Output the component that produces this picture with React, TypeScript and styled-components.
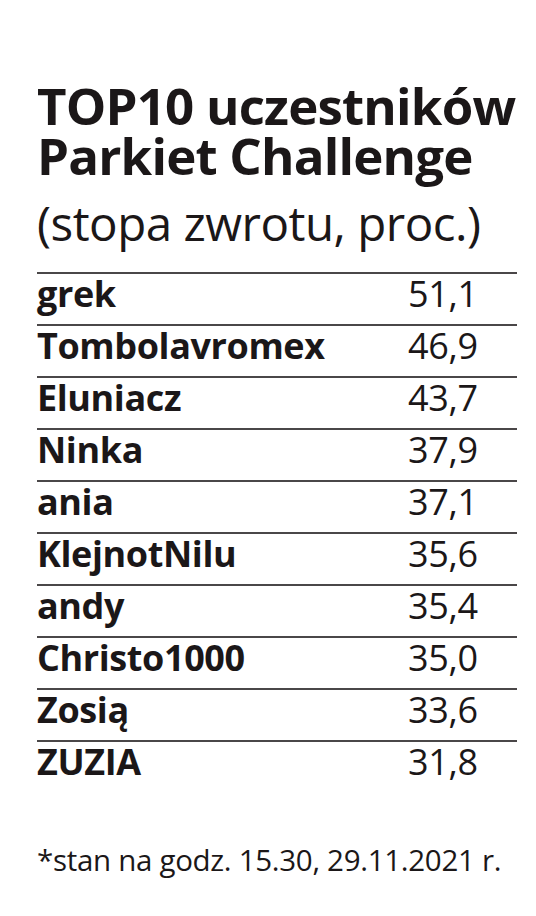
import styled, { createGlobalStyle } from 'styled-components';

const GlobalStyle = createGlobalStyle`
  html, body {
    margin: 0;
    padding: 0;
    background: #ffffff;
  }
  body {
    font-family: 'Open Sans', 'Noto Sans', sans-serif;
    color: #1b1718;
  }
`;

const Page = styled.div`
  width: 536px;
  min-height: 916px;
  box-sizing: border-box;
  padding: 80px 19px 0 37px;
`;

const Title = styled.h1`
  margin: 0;
  font-size: 51px;
  line-height: 50px;
  font-weight: 700;
  letter-spacing: -0.8px;
  white-space: nowrap;
`;

const Subtitle = styled.p`
  margin: 17px 0 0;
  font-size: 47.5px;
  line-height: 52px;
  font-weight: 400;
  letter-spacing: -0.5px;
  white-space: nowrap;
`;

const Table = styled.div`
  margin-top: 23px;
  display: flex;
  flex-direction: column;
`;

const Row = styled.div`
  display: grid;
  grid-template-columns: 371px 1fr;
  align-items: start;
  height: 52px;
  box-sizing: border-box;
  border-top: 2px solid #4a4748;
  line-height: 40px;
`;

const Name = styled.span`
  font-size: 36px;
  font-weight: 700;
  letter-spacing: -0.4px;
`;

const Value = styled.span`
  font-size: 36px;
  font-weight: 400;
  letter-spacing: -0.3px;
`;

const Note = styled.p`
  margin: 48px 0 0;
  font-size: 29.5px;
  line-height: 40px;
  font-weight: 400;
  letter-spacing: -0.3px;
  white-space: nowrap;
`;

const rows = [
  ['grek', '51,1'],
  ['Tombolavromex', '46,9'],
  ['Eluniacz', '43,7'],
  ['Ninka', '37,9'],
  ['ania', '37,1'],
  ['KlejnotNilu', '35,6'],
  ['andy', '35,4'],
  ['Christo1000', '35,0'],
  ['Zosią', '33,6'],
  ['ZUZIA', '31,8'],
];

export default function App() {
  return (
    <>
      <GlobalStyle />
      <Page>
        <Title>
          TOP10 uczestników
          <br />
          Parkiet Challenge
        </Title>
        <Subtitle>(stopa zwrotu, proc.)</Subtitle>
        <Table>
          {rows.map(([name, value]) => (
            <Row key={name}>
              <Name>{name}</Name>
              <Value>{value}</Value>
            </Row>
          ))}
        </Table>
        <Note>*stan na godz. 15.30, 29.11.2021 r.</Note>
      </Page>
    </>
  );
}
